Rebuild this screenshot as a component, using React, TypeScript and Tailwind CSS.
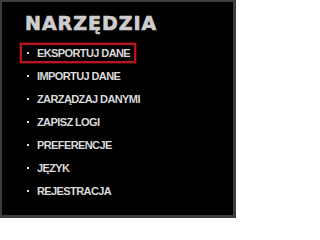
const items = [
  'EKSPORTUJ DANE',
  'IMPORTUJ DANE',
  'ZARZĄDZAJ DANYMI',
  'ZAPISZ LOGI',
  'PREFERENCJE',
  'JĘZYK',
  'REJESTRACJA',
]

export default function App() {
  const active = 0

  return (
    <div className="h-[218px] w-[236px] border-t-2 border-l-2 border-r-[3px] border-b-[3px] border-[#3d3d3d] bg-black font-['Liberation_Sans',Arial,sans-serif]">
      <div className="pl-[23px] pt-[9px]">
        <h1 className="font-['DejaVu_Sans',Verdana,sans-serif] text-[19px] font-bold leading-[24px] tracking-[1px] text-[#cdcdcd] [-webkit-text-stroke:0.7px_#cdcdcd]">
          NARZĘDZIA
        </h1>
      </div>
      <ul className="mt-[8px] flex flex-col gap-[3px] pl-[18px]">
        {items.map((item, i) => (
          <li
            key={item}
            className={`flex h-[20px] w-[116px] items-center gap-[8px] border-2 pl-[5px] ${
              i === active ? 'border-[#b3161c] outline outline-1 outline-[#4a0606]' : 'border-transparent'
            }`}
          >
            <span className="h-[2px] w-[2px] shrink-0 bg-[#e0e0e0]" />
            <span className="whitespace-nowrap text-[11px] font-bold leading-none tracking-[-0.6px] text-[#dadada]">
              {item}
            </span>
          </li>
        ))}
      </ul>
    </div>
  )
}
